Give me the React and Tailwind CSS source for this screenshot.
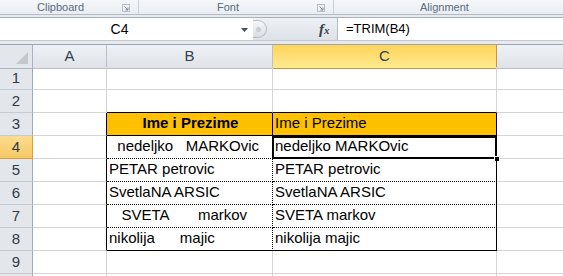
import React from "react";

const G = "grid grid-cols-[33px_74px_166px_224px_1fr]";
const cellBase = "h-[23px] border-r border-b border-[#d4d4d4] flex items-end pb-[1px] pl-[2px] whitespace-pre overflow-hidden";

function Launcher({ className }) {
  return (
    <svg className={className} width="8" height="8" viewBox="0 0 8 8">
      <rect x="0.5" y="0.5" width="7" height="7" fill="none" stroke="#b7bec8" />
      <path d="M2.5 2.5 L6 6 M6 3.5 V6 H3.5" stroke="#7d8796" strokeWidth="1" fill="none" />
    </svg>
  );
}

const rows = [
  { n: 1 },
  { n: 2, b: "", bc: "border-b-black", cc: "border-b-black" },
  {
    n: 3,
    b: "Ime i Prezime",
    c: "Ime i Prezime",
    ac: "border-r-black",
    bc: "bg-[#ffc000] border-r-black border-b-black font-bold justify-center",
    cc: "bg-[#ffc000] border-r-black border-b-black",
  },
  {
    n: 4,
    b: "  nedeljko   MARKOvic",
    c: "nedeljko MARKOvic",
    sel: true,
    ac: "border-r-black",
    bc: "border-r-black border-b-black [border-right-style:dotted] [border-bottom-style:dotted]",
    cc: "border-r-black border-b-black [border-bottom-style:dotted]",
  },
  {
    n: 5,
    b: "PETAR petrovic",
    c: "PETAR petrovic",
    ac: "border-r-black",
    bc: "border-r-black border-b-black [border-right-style:dotted] [border-bottom-style:dotted]",
    cc: "border-r-black border-b-black [border-bottom-style:dotted]",
  },
  {
    n: 6,
    b: "SvetlaNA ARSIC",
    c: "SvetlaNA ARSIC",
    ac: "border-r-black",
    bc: "border-r-black border-b-black [border-right-style:dotted] [border-bottom-style:dotted]",
    cc: "border-r-black border-b-black [border-bottom-style:dotted]",
  },
  {
    n: 7,
    b: "   SVETA       markov",
    c: "SVETA markov",
    ac: "border-r-black",
    bc: "border-r-black border-b-black [border-right-style:dotted] [border-bottom-style:dotted]",
    cc: "border-r-black border-b-black [border-bottom-style:dotted]",
  },
  {
    n: 8,
    b: "nikolija      majic",
    c: "nikolija majic",
    ac: "border-r-black",
    bc: "border-r-black border-b-black [border-right-style:dotted]",
    cc: "border-r-black border-b-black",
  },
  { n: 9 },
  { n: "" },
];

export default function App() {
  return (
    <div className="w-[563px] h-[276px] overflow-hidden bg-white font-['Liberation_Sans',Arial,sans-serif] text-black">
      {/* ribbon group labels */}
      <div className="h-[15px] flex bg-gradient-to-b from-[#f5f7fa] to-[#e9edf2] border-b border-[#b4bcc7] text-[11px] leading-[14px] text-[#5b6a80]">
        <div className="w-[139px] relative border-r border-[#c9cfd7] pl-[37px]">
          Clipboard
          <Launcher className="absolute right-[8px] top-[4px]" />
        </div>
        <div className="w-[195px] relative border-r border-[#c9cfd7] pl-[78px]">
          Font
          <Launcher className="absolute right-[8px] top-[4px]" />
        </div>
        <div className="flex-1 pl-[86px]">Alignment</div>
      </div>

      {/* formula bar */}
      <div className="h-[29px] bg-[#e6e9ee] pt-[2px] pb-[2px] flex">
        <div className="h-[24px] w-[253px] bg-white border-t border-b border-t-[#a9b1bb] border-b-[#c3c9d1] relative flex items-center">
          <span className="w-[237px] text-center text-[14px] pl-[2px]">C4</span>
          <svg className="absolute left-[241px] top-[10px]" width="8" height="4" viewBox="0 0 8 4">
            <path d="M0 0 H7 L3.5 4 Z" fill="#4a4f57" />
          </svg>
        </div>
        <div className="h-[24px] w-[84px] relative bg-gradient-to-b from-[#eef1f5] to-[#dde2e8] border-t border-b border-t-[#a9b1bb] border-b-[#c3c9d1]">
          <div className="absolute left-[0px] top-[2px] w-[14px] h-[18px] rounded-r-full bg-gradient-to-b from-[#f6f7f9] to-[#d9dde3] border border-l-0 border-[#b5bcc6]">
            <div className="absolute left-[3px] top-[6px] w-[5px] h-[5px] rounded-full bg-[#c8cdd4]" />
          </div>
          <span className="absolute left-[66px] top-[2px] font-['Liberation_Serif',serif] italic font-bold text-[15px] text-[#3b3f45] leading-[18px]">
            f<span className="text-[11px]">x</span>
          </span>
        </div>
        <div className="h-[24px] flex-1 bg-white border border-r-0 border-t-[#a9b1bb] border-b-[#c3c9d1] border-l-[#b3bac4] flex items-center pl-[8px] text-[13px]">
          =TRIM(B4)
        </div>
      </div>

      {/* column headers */}
      <div className={`${G} h-[23px] border-t border-[#9aa5b2] text-[15px] text-[#33404f]`}>
        <div className="relative bg-[#e3e7ec] border-r border-b border-[#a8b3bf]">
          <svg className="absolute right-[4px] bottom-[4px]" width="12" height="12" viewBox="0 0 12 12">
            <path d="M12 0 V12 H0 Z" fill="#c3c8ce" />
          </svg>
        </div>
        <div className="bg-gradient-to-b from-[#eef1f4] to-[#dfe3e8] border-r border-b border-[#b8c0ca] flex items-center justify-center">A</div>
        <div className="bg-gradient-to-b from-[#eef1f4] to-[#dfe3e8] border-r border-b border-[#b8c0ca] flex items-center justify-center">B</div>
        <div className="bg-gradient-to-b from-[#ffd458] to-[#ffea8f] border-r border-b border-[#c6953f] flex items-center justify-center">C</div>
        <div className="bg-gradient-to-b from-[#eef1f4] to-[#dfe3e8] border-b border-[#b8c0ca]" />
      </div>

      {/* rows */}
      {rows.map((r, i) => (
        <div key={i} className={`${G} text-[15px]`}>
          <div
            className={`h-[23px] border-r border-b flex items-center justify-center text-[#2f3b4a] ${
              r.sel
                ? "bg-gradient-to-b from-[#fbdc8f] to-[#f5c865] border-[#dc9e3c]"
                : "bg-[#e3e7ec] border-r-[#9eabb8] border-b-[#c5cbd2]"
            }`}
          >
            {r.n}
          </div>
          <div className={`${cellBase} ${r.ac || ""}`} />
          <div className={`${cellBase} ${r.bc || ""}`}>{r.b || ""}</div>
          <div className={`${cellBase} ${r.cc || ""} relative overflow-visible`}>
            {r.c || ""}
            {r.sel && (
              <>
                <div className="absolute left-[-1px] top-[0px] right-[-1px] bottom-[-1px] border-2 border-black pointer-events-none" />
                <div className="absolute right-[-4px] bottom-[-4px] w-[6px] h-[6px] bg-black border border-white" />
              </>
            )}
          </div>
          <div className="h-[23px] border-b border-[#d4d4d4]" />
        </div>
      ))}
    </div>
  );
}
